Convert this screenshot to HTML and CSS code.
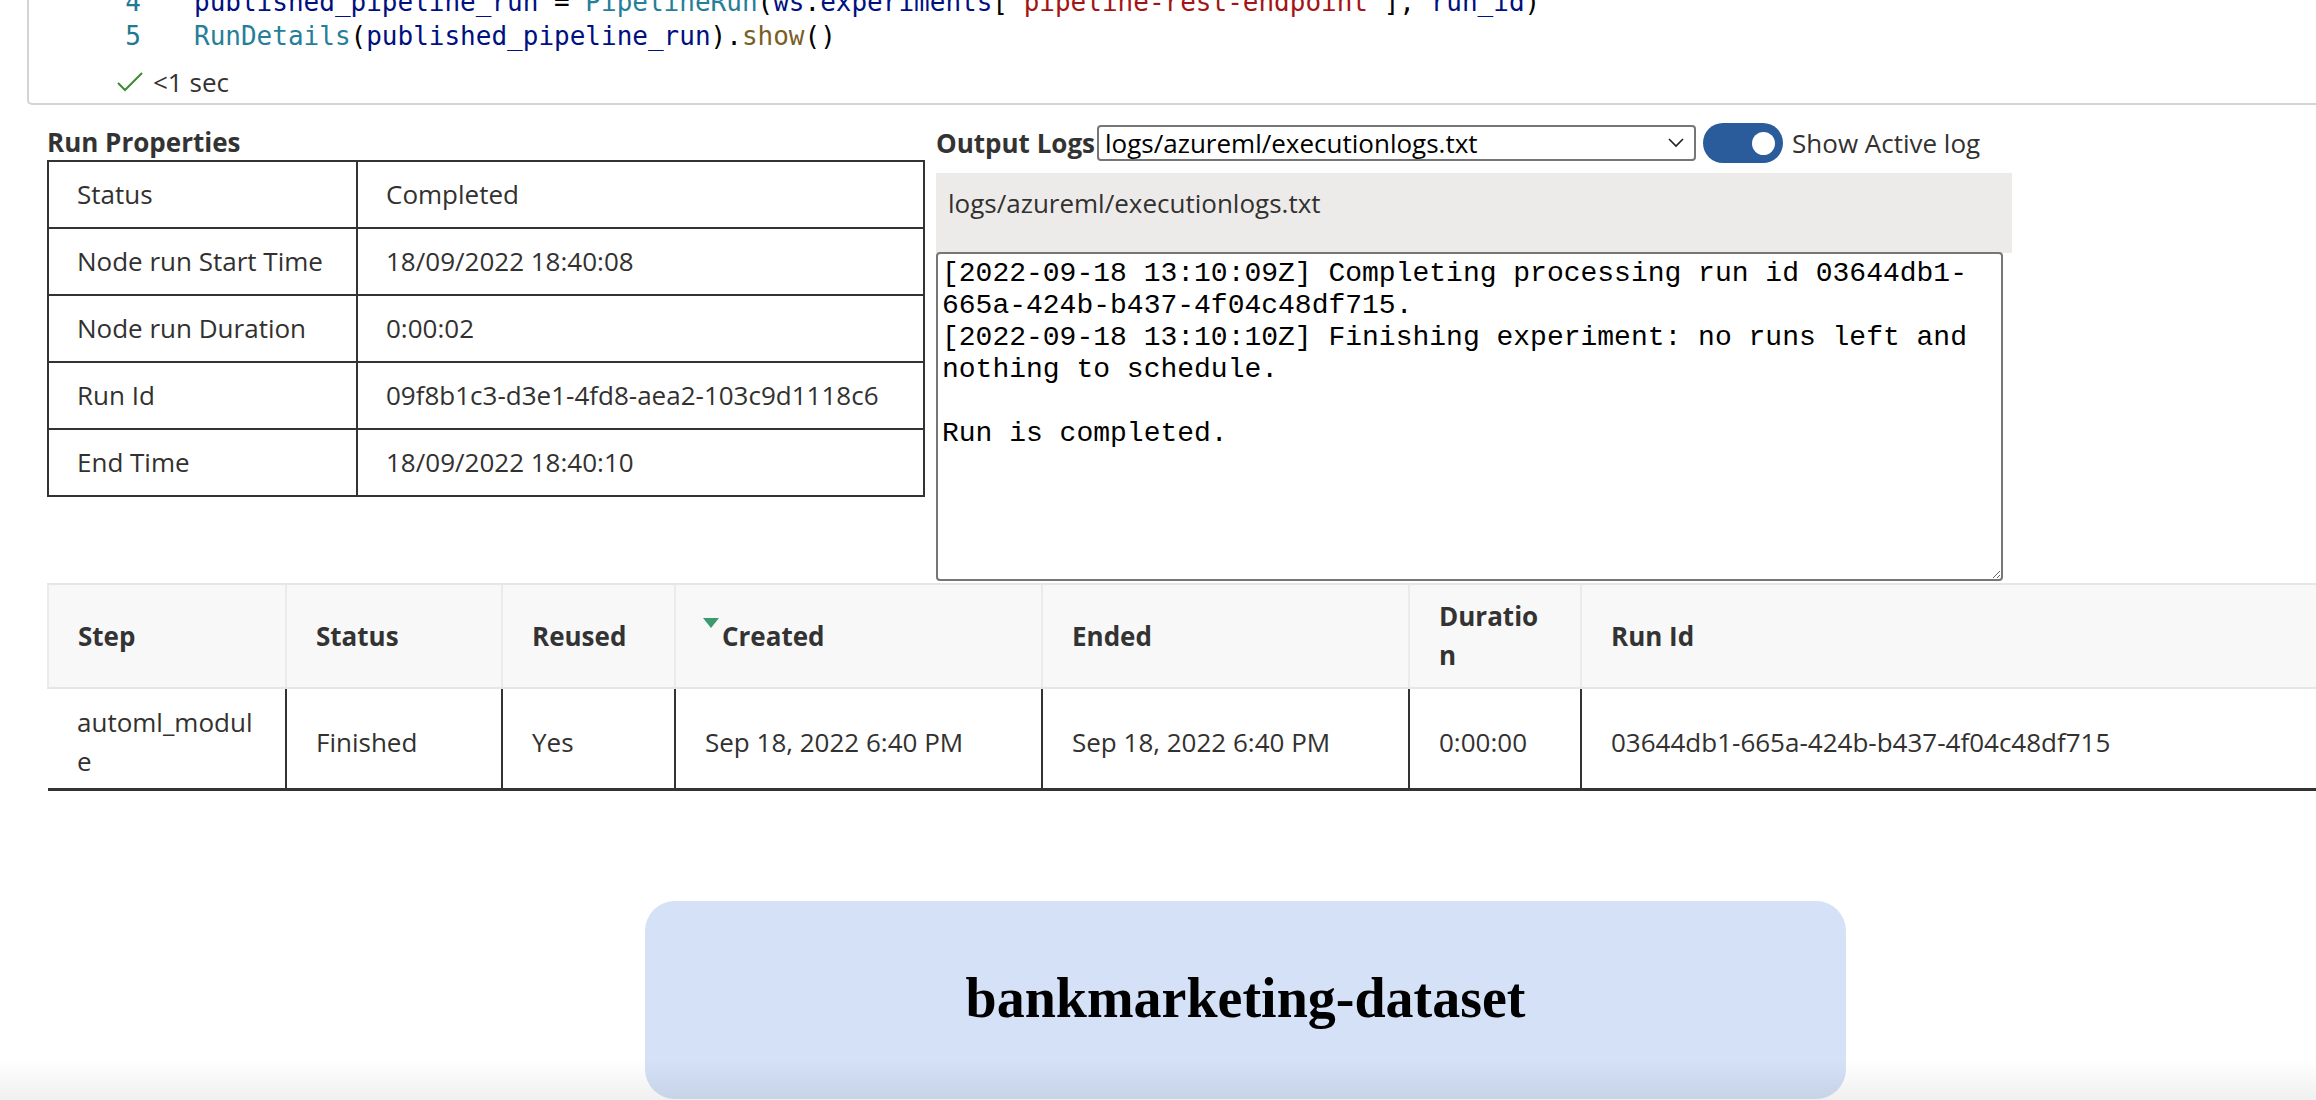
FILE: index.html
```html
<!DOCTYPE html>
<html>
<head>
<meta charset="utf-8">
<link rel="stylesheet" href="styles.css">
</head>
<body>
<div class="cell">
  <div class="code">
    <div class="ln"><span class="num">4</span><span class="src"><span class="v">published_pipeline_run</span> = <span class="c">PipelineRun</span>(<span class="v">ws</span>.<span class="v">experiments</span>[<span class="s">'pipeline-rest-endpoint'</span>], <span class="v">run_id</span>)</span></div>
    <div class="ln"><span class="num">5</span><span class="src"><span class="c">RunDetails</span>(<span class="v">published_pipeline_run</span>).<span class="f">show</span>()</span></div>
  </div>
  <div class="status"><svg class="check" width="26" height="20" viewBox="0 0 26 20"><path d="M1 11 L8 18 L25 1" fill="none" stroke="#3c8a34" stroke-width="2"/></svg><span>&lt;1 sec</span></div>
</div>

<div class="widget">
  <div class="props">
    <div class="title">Run Properties</div>
    <table class="ptable">
      <tr><td class="k">Status</td><td>Completed</td></tr>
      <tr><td class="k">Node run Start Time</td><td>18/09/2022 18:40:08</td></tr>
      <tr><td class="k">Node run Duration</td><td>0:00:02</td></tr>
      <tr><td class="k">Run Id</td><td>09f8b1c3-d3e1-4fd8-aea2-103c9d1118c6</td></tr>
      <tr><td class="k">End Time</td><td>18/09/2022 18:40:10</td></tr>
    </table>
  </div>
  <div class="logs">
    <div class="logbar">
      <span class="title">Output Logs</span>
      <div class="select"><span>logs/azureml/executionlogs.txt</span><svg width="16" height="10" viewBox="0 0 16 10"><path d="M1 1 L8 8 L15 1" fill="none" stroke="#222" stroke-width="1.6"/></svg></div>
      <div class="toggle"><span class="knob"></span></div>
      <span class="tlabel">Show Active log</span>
    </div>
    <div class="logname">logs/azureml/executionlogs.txt</div>
    <textarea class="logtext" spellcheck="false">[2022-09-18 13:10:09Z] Completing processing run id 03644db1-665a-424b-b437-4f04c48df715.
[2022-09-18 13:10:10Z] Finishing experiment: no runs left and nothing to schedule.

Run is completed.</textarea>
  </div>
</div>

<table class="steps">
  <colgroup>
    <col class="c1"><col class="c2"><col class="c3"><col class="c4"><col class="c5"><col class="c6"><col class="c7">
  </colgroup>
  <thead>
    <tr><th>Step</th><th>Status</th><th>Reused</th><th><span class="sort"></span>Created</th><th>Ended</th><th class="dur">Duration</th><th>Run Id</th></tr>
  </thead>
  <tbody>
    <tr><td>automl_module</td><td>Finished</td><td>Yes</td><td>Sep 18, 2022 6:40 PM</td><td>Sep 18, 2022 6:40 PM</td><td>0:00:00</td><td>03644db1-665a-424b-b437-4f04c48df715</td></tr>
  </tbody>
</table>

<div class="graph">
  <div class="node">bankmarketing-dataset</div>
</div>
<div class="fade"></div>
</body>
</html>
```
FILE: styles.css
```css
html, body {
  margin: 0;
  padding: 0;
  background: #fff;
  overflow: hidden;
}
body {
  font-family: "Open Sans", "Noto Sans", sans-serif;
  font-size: 26px;
  color: #323130;
  width: 2316px;
  height: 1100px;
}
.cell {
  margin-top: -15px;
  margin-left: 27px;
  border-left: 2px solid #d4d4d4;
  border-bottom: 2px solid #d4d4d4;
  border-bottom-left-radius: 5px;
  padding-bottom: 5px;
}
.code {
  font-family: "DejaVu Sans Mono", monospace;
  font-size: 26px;
  line-height: 34px;
  color: #000;
}
.ln {
  display: flex;
  white-space: pre;
}
.num {
  width: 112px;
  text-align: right;
  color: #237893;
  flex: none;
}
.src { margin-left: 53px; }
.v { color: #001080; }
.c { color: #267f99; }
.s { color: #a31515; }
.f { color: #795e26; }
.status {
  display: flex;
  align-items: center;
  padding-left: 88px;
  margin-top: 13px;
  line-height: 32px;
  height: 32px;
  color: #333;
}
.check { margin-right: 10px; }
.widget {
  display: flex;
  gap: 11px;
  padding-left: 47px;
  margin-top: 18px;
}
.props { width: 878px; flex: none; }
.title {
  font-weight: 700;
  color: #333;
  line-height: 35px;
}
.props .title { padding-top: 2px; }
.ptable {
  width: 878px;
  border-collapse: collapse;
  border: 2px solid #333;
}
.ptable td {
  border: 2px solid #333;
  padding: 0 28px;
  height: 65px;
  line-height: 35px;
}
.ptable td.k { width: 251px; }
.logs { width: 1076px; flex: none; }
.logbar {
  display: flex;
  align-items: center;
  height: 40px;
}
.select {
  margin-left: 2px;
  width: 599px;
  height: 36px;
  box-sizing: border-box;
  border: 2px solid #767676;
  border-radius: 4px;
  display: flex;
  align-items: center;
  justify-content: space-between;
  padding: 0 10px 0 6px;
  color: #000;
  line-height: 32px;
}
.toggle {
  margin-left: 7px;
  width: 80px;
  height: 40px;
  border-radius: 20px;
  background: #2a5b9a;
  display: flex;
  align-items: center;
  justify-content: flex-end;
  padding-right: 8px;
  box-sizing: border-box;
}
.knob {
  width: 23px;
  height: 23px;
  border-radius: 50%;
  background: #fff;
}
.tlabel { margin-left: 9px; color: #323130; }
.logname {
  margin-top: 10px;
  background: #edebe9;
  height: 80px;
  box-sizing: border-box;
  padding: 13px 12px 0;
  line-height: 35px;
}
.logtext {
  display: block;
  margin: -1px 0 0 0;
  width: 1067px;
  height: 329px;
  box-sizing: border-box;
  border: 2px solid #767676;
  border-radius: 4px;
  padding: 4px 4px;
  font-family: "Liberation Mono", "Courier New", monospace;
  font-size: 28px;
  line-height: 32px;
  color: #000;
  background: #fff;
  resize: both;
  overflow: hidden;
}
.steps {
  margin-left: 47px;
  margin-top: 2px;
  border-collapse: collapse;
  table-layout: fixed;
  width: 2269px;
}
.c1 { width: 238px; }
.c2 { width: 216px; }
.c3 { width: 173px; }
.c4 { width: 367px; }
.c5 { width: 367px; }
.c6 { width: 172px; }
.c7 { width: 736px; }
.steps th, .steps td {
  text-align: left;
  line-height: 39px;
  vertical-align: middle;
  word-break: break-all;
}
.steps th {
  padding: 12px 29px;
  height: 78px;
  background: #f8f8f8;
  font-weight: 700;
  color: #333;
  border-top: 2px solid #e6e6e6;
  border-bottom: 2px solid #e6e6e6;
  border-left: 2px solid #ebebeb;
}
.steps th.dur { padding-right: 31px; }
.steps td {
  padding: 14px 29px 7px;
  height: 78px;
  border-left: 2px solid #333;
  border-bottom: 3px solid #333;
}
.steps td:first-child { border-left: none; }
.sort {
  display: inline-block;
  vertical-align: top;
  width: 0;
  height: 0;
  border-left: 8px solid transparent;
  border-right: 8px solid transparent;
  border-top: 10px solid #3c9a6c;
  margin: 1px 3px 0 -2px;
}
.graph {
  padding-top: 110px;
}
.node {
  margin-left: 645px;
  width: 1201px;
  height: 198px;
  padding-bottom: 4px;
  box-sizing: border-box;
  border-radius: 30px;
  background: #d4e1f6;
  display: flex;
  align-items: center;
  justify-content: center;
  font-family: "Liberation Serif", "Times New Roman", serif;
  font-weight: 700;
  font-size: 56px;
  color: #000;
}
.fade {
  position: fixed;
  left: 0;
  right: 0;
  bottom: 0;
  height: 40px;
  background: linear-gradient(to bottom, rgba(0,0,0,0), rgba(0,0,0,0.06));
  pointer-events: none;
}
```
